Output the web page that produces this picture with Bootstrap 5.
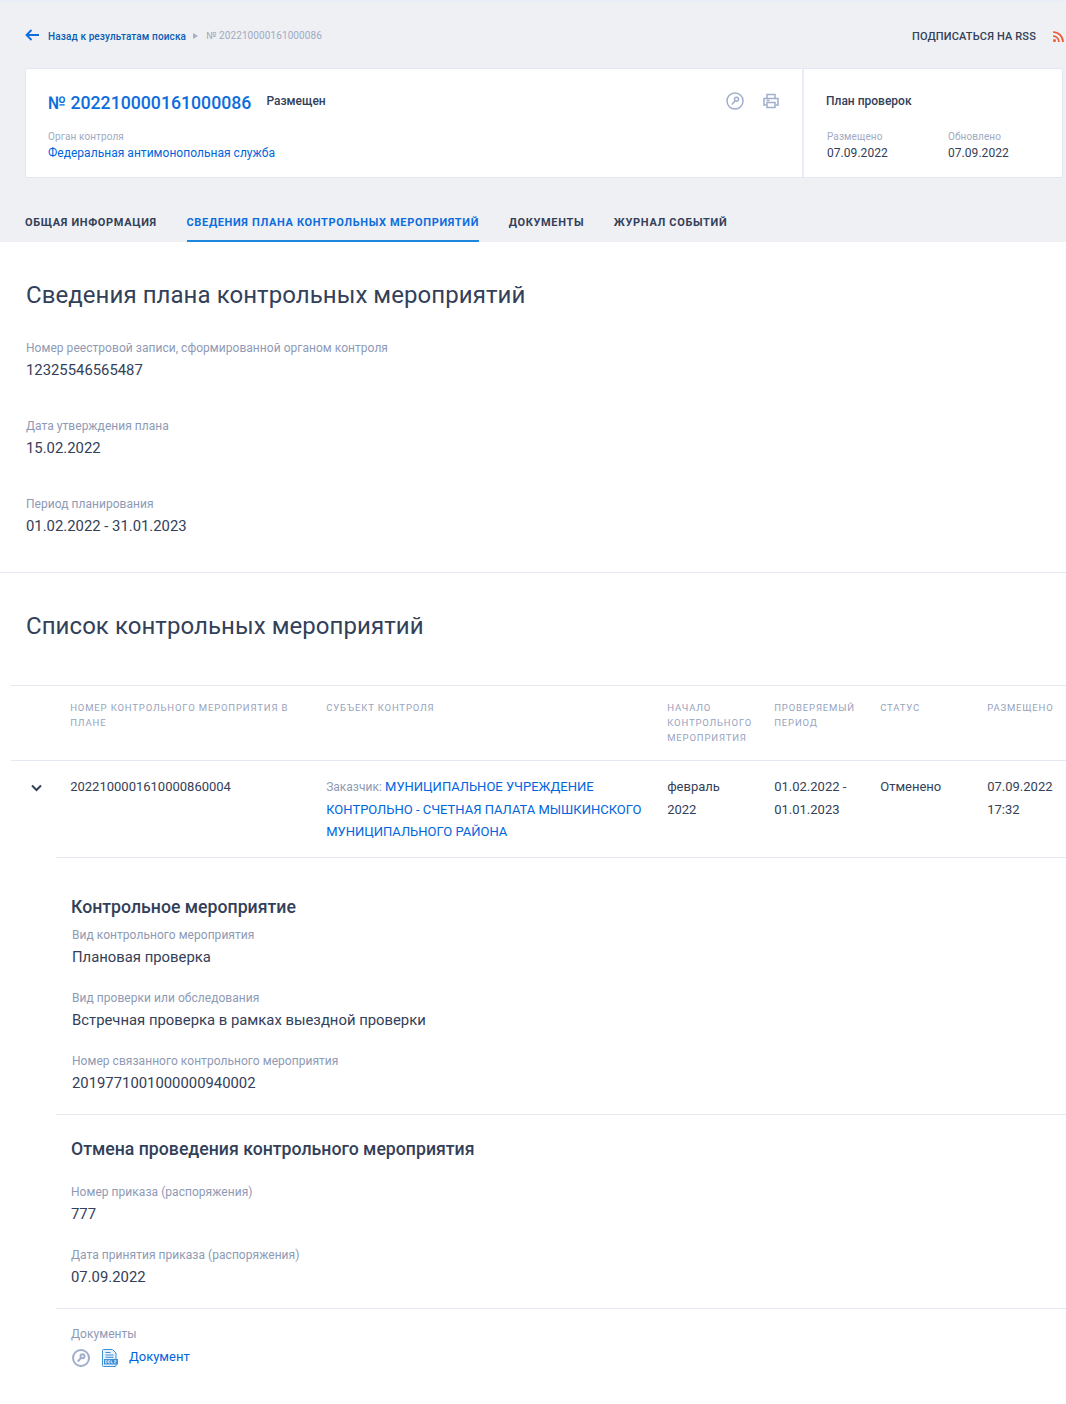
<!DOCTYPE html>
<html lang="ru">
<head>
  <meta charset="UTF-8">
  <title>План проверок</title>
  <meta name="viewport" content="width=device-width, initial-scale=1">
  <link href="https://cdn.jsdelivr.net/npm/bootstrap@5.3.3/dist/css/bootstrap.min.css" rel="stylesheet">
  <style>
    html, body { overflow-x: hidden; }
    body { font-family: Roboto, "Liberation Sans", sans-serif; color: #334059; font-size: 15px; background: #fff; }
    a { color: #0065dd; text-decoration: none; }
    .top-area { background: #eef0f3; border-top: 2px solid #e8edf6; height: 242px; padding: 0 0 0 25px; }
    .crumbs { height: 66px; width: 1041px; }
    .crumb-back { font-size: 10px; font-weight: 500; color: #0b5cb5; letter-spacing: .12px; margin-left: 9px; margin-top: 2px; }
    .crumb-sep { width: 0; height: 0; border-left: 5px solid #a5afc6; border-top: 3px solid transparent; border-bottom: 3px solid transparent; margin: 2px 8px 0 7px; }
    .crumb-cur { font-size: 10px; color: #a0aac2; letter-spacing: .1px; }
    .rss-link { font-size: 11px; font-weight: 500; color: #334059; letter-spacing: .15px; margin-right: 17px; margin-top: 4px; }
    .rss-ico { margin-right: 2px; margin-top: 2px; }
    .head-box { width: 1038px; height: 110px; background: #fff; border: 1px solid #e1e8f3; border-radius: 2px; }
    .head-main { width: 778px; padding: 0 22px; border-right: 2px solid #e8edf6; }
    .head-num { font-size: 17.7px; font-weight: 500; color: #0d6ddd; line-height: 24px; }
    .head-state { font-size: 12px; font-weight: 500; color: #334059; margin-left: 15px; margin-top: -4px; }
    .tiny-label { font-size: 10px; color: #a0aac2; letter-spacing: .1px; line-height: 14px; }
    .head-org { font-size: 12px; letter-spacing: .03px; line-height: 18px; }
    .head-side { width: 258px; padding: 0 22px; }
    .side-title { font-size: 12px; font-weight: 500; color: #334059; }
    .side-date { font-size: 12px; line-height: 18px; letter-spacing: .05px; }
    .tab-row { margin-top: 27px; gap: 29.7px; }
    .tab-item { font-size: 11px; font-weight: 700; letter-spacing: .66px; color: #334059; height: 37px; line-height: 36px; }
    .tab-item.tab-on { color: #0d6ddd; border-bottom: 2px solid #1f86dd; }
    .sect-title { font-size: 24px; font-weight: 400; color: #334059; line-height: 30px; margin: 0; letter-spacing: .06px; }
    .plan-sect { padding: 38px 26px 0; height: 331px; border-bottom: 1px solid #e4e8f0; }
    .field-label { font-size: 12px; color: #8e9ab5; line-height: 17px; letter-spacing: .04px; }
    .field-val { font-size: 14.85px; color: #334059; line-height: 26px; }
    .plan-field { height: 78px; }
    .plan-fields { margin-top: 30px; }
    .list-title { padding: 38px 26px 0; height: 112px; }
    .ev-wrap { margin-left: 11px; width: 1055px; }
    .ev-table { table-layout: fixed; width: 1055px; margin: 0; --bs-table-bg: transparent; }
    .ev-table th { font-size: 9.5px; font-weight: 400; letter-spacing: .85px; line-height: 15px; color: #97a3bd; padding: 14px 14px 14px 14.200px; vertical-align: top; height: 75px; border-top: 1px solid #e4e8f0; border-bottom: 1px solid #e4e8f0; box-shadow: none; }
    .ev-table td { font-size: 13px; line-height: 22.5px; color: #334059; padding: 15px 8px 13px 14.200px; vertical-align: top; border-bottom: 1px solid #e4e8f0; box-shadow: none; }
    .ev-table td.chev-cell { border-bottom: 0; padding: 23px 0 0 20px; line-height: 0; }
    .cust-label { color: #8e9ab5; font-size: 12px; }
    .detail-block { margin-left: 45px; }
    .detail-sub { font-size: 17.7px; font-weight: 500; color: #334059; line-height: 24px; margin: 0; }
    .detail-one { padding: 37px 0 0 15px; height: 257px; border-bottom: 1px solid #e4e8f0; }
    .detail-two { padding: 22px 0 0 15px; height: 194px; border-bottom: 1px solid #e4e8f0; }
    .detail-one .detail-field { height: 63px; padding-left: 1px; }
    .detail-one .field-label { line-height: 18px; }
    .detail-two .detail-field { height: 63px; }
    .detail-one .detail-first { margin-top: 7px; }
    .detail-two .detail-first { margin-top: 23px; }
    .doc-block { padding: 17px 0 0 15px; height: 95px; }
    .doc-link { font-size: 13px; margin-left: 11px; margin-top: -2px; }
  </style>
</head>
<body>
  <div class="top-area">
    <div class="crumbs d-flex align-items-center justify-content-between">
      <div class="d-flex align-items-center">
        <svg width="14" height="12" viewBox="0 0 14 12" fill="none" stroke="#0d6ddd" stroke-width="1.8"><path d="M14 6H2M6.500 1 1.500 6l5 5"/></svg>
        <a class="crumb-back" href="#">Назад к результатам поиска</a>
        <span class="crumb-sep"></span>
        <span class="crumb-cur">№ 202210000161000086</span>
      </div>
      <div class="d-flex align-items-center">
        <a class="rss-link" href="#">ПОДПИСАТЬСЯ НА RSS</a>
        <svg class="rss-ico" width="11" height="11" viewBox="0 0 11 11" fill="none" stroke="#ee5a33" stroke-width="1.7"><path d="M0 1c5.500 0 10 4.500 10 10M0 5c3.300 0 6 2.700 6 6"/><circle cx="1.500" cy="9.500" r="1.500" fill="#ee5a33" stroke="none"/></svg>
      </div>
    </div>
    <div class="head-box d-flex">
      <div class="head-main">
        <div class="d-flex align-items-start justify-content-between">
          <div class="d-flex align-items-center" style="margin-top:22px">
            <span class="head-num">№ 202210000161000086</span>
            <span class="head-state">Размещен</span>
          </div>
          <div class="d-flex align-items-center" style="margin-top:23px;gap:19px;margin-right:1px">
            <svg width="18" height="18" viewBox="0 0 18 18" fill="none" stroke="#a0aecb" stroke-width="1.5"><circle cx="9" cy="9" r="8"/><circle cx="10.500" cy="7.200" r="2"/><path d="M9 9 5.800 12.500"/></svg>
            <svg width="16" height="16" viewBox="0 0 16 16" fill="none" stroke="#a0aecb" stroke-width="1.5"><path d="M4 5V1.500h8V5M3.500 12H1V5.500h14V12h-2.500"/><path d="M4 9.500h8v5H4z"/><path d="M3.500 7.500h3"/></svg>
          </div>
        </div>
        <div class="tiny-label" style="margin-top:15px">Орган контроля</div>
        <a class="head-org d-block" href="#">Федеральная антимонопольная служба</a>
      </div>
      <div class="head-side">
        <div class="side-title" style="margin-top:23px">План проверок</div>
        <div class="d-flex" style="margin-top:20px">
          <div style="width:122px;padding-left:1px">
            <div class="tiny-label">Размещено</div>
            <div class="side-date">07.09.2022</div>
          </div>
          <div>
            <div class="tiny-label">Обновлено</div>
            <div class="side-date">07.09.2022</div>
          </div>
        </div>
      </div>
    </div>
    <div class="tab-row d-flex">
      <div class="tab-item">ОБЩАЯ ИНФОРМАЦИЯ</div>
      <div class="tab-item tab-on">СВЕДЕНИЯ ПЛАНА КОНТРОЛЬНЫХ МЕРОПРИЯТИЙ</div>
      <div class="tab-item">ДОКУМЕНТЫ</div>
      <div class="tab-item">ЖУРНАЛ СОБЫТИЙ</div>
    </div>
  </div>

  <div class="plan-sect">
    <h2 class="sect-title">Сведения плана контрольных мероприятий</h2>
    <div class="plan-fields">
      <div class="plan-field">
        <div class="field-label">Номер реестровой записи, сформированной органом контроля</div>
        <div class="field-val">12325546565487</div>
      </div>
      <div class="plan-field">
        <div class="field-label">Дата утверждения плана</div>
        <div class="field-val">15.02.2022</div>
      </div>
      <div class="plan-field">
        <div class="field-label">Период планирования</div>
        <div class="field-val">01.02.2022 - 31.01.2023</div>
      </div>
    </div>
  </div>

  <div class="list-title">
    <h2 class="sect-title">Список контрольных мероприятий</h2>
  </div>

  <div class="ev-wrap">
    <table class="table ev-table">
      <colgroup>
        <col style="width:45px"><col style="width:256px"><col style="width:341px"><col style="width:107px"><col style="width:106px"><col style="width:107px"><col style="width:93px">
      </colgroup>
      <thead>
        <tr>
          <th></th>
          <th>НОМЕР КОНТРОЛЬНОГО МЕРОПРИЯТИЯ В ПЛАНЕ</th>
          <th>СУБЪЕКТ КОНТРОЛЯ</th>
          <th>НАЧАЛО КОНТРОЛЬНОГО МЕРОПРИЯТИЯ</th>
          <th>ПРОВЕРЯЕМЫЙ ПЕРИОД</th>
          <th>СТАТУС</th>
          <th>РАЗМЕЩЕНО</th>
        </tr>
      </thead>
      <tbody>
        <tr>
          <td class="chev-cell"><svg width="11" height="8" viewBox="0 0 11 8" fill="none" stroke="#334059" stroke-width="2"><path d="M1 1.500 5.500 6 10 1.500"/></svg></td>
          <td>2022100001610000860004</td>
          <td><span class="cust-label">Заказчик:</span> <a href="#">МУНИЦИПАЛЬНОЕ УЧРЕЖДЕНИЕ КОНТРОЛЬНО - СЧЕТНАЯ ПАЛАТА МЫШКИНСКОГО МУНИЦИПАЛЬНОГО РАЙОНА</a></td>
          <td>февраль 2022</td>
          <td>01.02.2022 - 01.01.2023</td>
          <td>Отменено</td>
          <td>07.09.2022 17:32</td>
        </tr>
      </tbody>
    </table>
    <div class="detail-block">
      <div class="detail-one">
        <h4 class="detail-sub">Контрольное мероприятие</h4>
        <div class="detail-field detail-first">
          <div class="field-label">Вид контрольного мероприятия</div>
          <div class="field-val">Плановая проверка</div>
        </div>
        <div class="detail-field">
          <div class="field-label">Вид проверки или обследования</div>
          <div class="field-val">Встречная проверка в рамках выездной проверки</div>
        </div>
        <div class="detail-field">
          <div class="field-label">Номер связанного контрольного мероприятия</div>
          <div class="field-val">2019771001000000940002</div>
        </div>
      </div>
      <div class="detail-two">
        <h4 class="detail-sub">Отмена проведения контрольного мероприятия</h4>
        <div class="detail-field detail-first">
          <div class="field-label">Номер приказа (распоряжения)</div>
          <div class="field-val">777</div>
        </div>
        <div class="detail-field">
          <div class="field-label">Дата принятия приказа (распоряжения)</div>
          <div class="field-val">07.09.2022</div>
        </div>
      </div>
      <div class="doc-block">
        <div class="field-label">Документы</div>
        <div class="d-flex align-items-center" style="margin-top:6px">
          <svg width="18" height="18" viewBox="0 0 18 18" fill="none" stroke="#a0aecb" stroke-width="2" style="margin-left:1px;margin-right:12px"><circle cx="9" cy="9" r="8"/><circle cx="10.500" cy="7.200" r="2"/><path d="M9 9 5.800 12.500"/></svg>
          <svg width="16" height="18" viewBox="0 0 16 18"><path d="M1.500 .5h9l3.500 3.500v12.500a1 1 0 0 1-1 1H1.500a1 1 0 0 1-1-1V1.500a1 1 0 0 1 1-1z" fill="#e6f1fb" stroke="#3d8fd6"/><path d="M3.500 3.500h5M3.500 6h8M3.500 8.300h8" stroke="#3d8fd6" fill="none"/><rect x="2" y="10" width="14" height="5.500" fill="#3d8fd6"/><path d="M3.500 11.500v2.500h1.500v-2.500zM6.500 11.500v2.500h1.500v-2.500zM9.500 11.500v2.500h1.500M12.500 11.500h1.500v1.200h-1.500v1.300h1.500" stroke="#e6f1fb" stroke-width=".7" fill="none"/></svg>
          <a class="doc-link" href="#">Документ</a>
        </div>
      </div>
    </div>
  </div>

  <script src="https://cdn.jsdelivr.net/npm/bootstrap@5.3.3/dist/js/bootstrap.bundle.min.js"></script>
</body>
</html>
